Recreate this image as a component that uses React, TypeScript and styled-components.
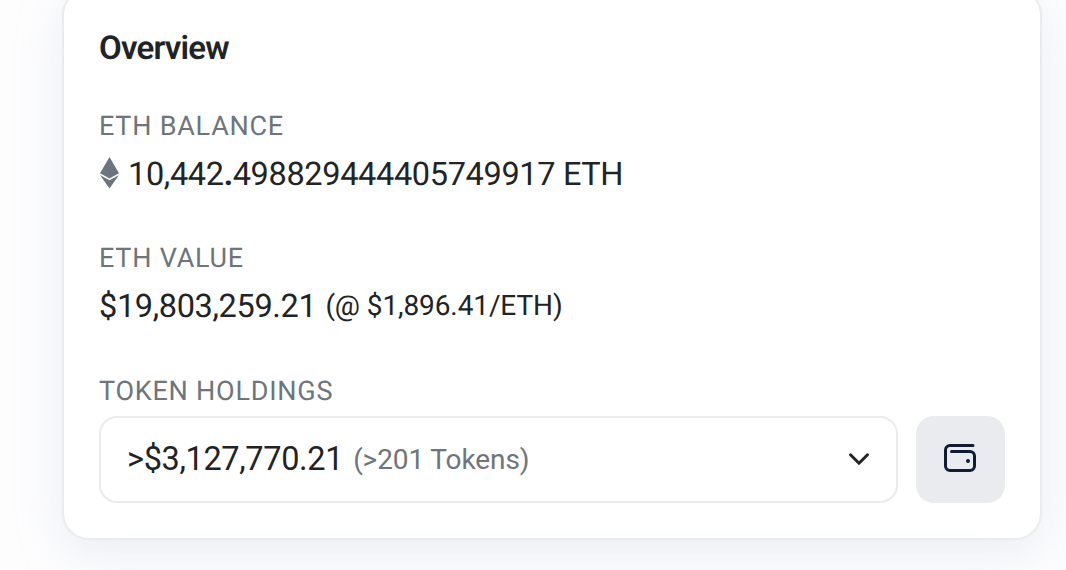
import styled, { createGlobalStyle } from "styled-components";

const GlobalStyle = createGlobalStyle`
  * {
    box-sizing: border-box;
  }

  body {
    margin: 0;
    background: #fdfdfe;
    color: #212325;
    font-family: Roboto, "Liberation Sans", sans-serif;
    text-rendering: geometricPrecision;
  }
`;

const Page = styled.main`
  display: flex;
  gap: 54px;
  height: 570px;
  padding-left: 62px;
  overflow: hidden;
`;

const Card = styled.section`
  flex: 0 0 980px;
  height: 552px;
  margin-top: -12px;
  padding: 39px 35px 0;
  background: #fff;
  border: 2px solid #e9ebee;
  border-radius: 27px;
  box-shadow: 0 14px 46px rgba(186, 195, 214, 0.27);
`;

const Title = styled.h3`
  margin: 0 0 39px;
  font-size: 33px;
  font-weight: 600;
  line-height: 40px;
  letter-spacing: -0.8px;
`;

const Item = styled.div<{ $gap?: number }>`
  margin-bottom: ${({ $gap = 0 }) => $gap}px;
`;

const Label = styled.h4`
  margin: 0;
  color: #6e757c;
  font-size: 27px;
  font-weight: 400;
  line-height: 36px;
  letter-spacing: 0.75px;
`;

const Value = styled.div`
  display: flex;
  align-items: center;
  height: 48px;
  margin-top: 6px;
  font-size: 32.5px;
  letter-spacing: -0.35px;
  white-space: pre;
`;

const EthIcon = styled.svg`
  width: 19px;
  height: 32px;
  margin: -2px 9px 0 1px;
  fill: #6c757d;
`;

const Small = styled.span<{ $muted?: boolean }>`
  margin-left: ${({ $muted }) => ($muted ? 10 : 9)}px;
  margin-top: ${({ $muted }) => ($muted ? 1 : -1)}px;
  color: ${({ $muted }) => ($muted ? "#6e757c" : "inherit")};
  font-size: 28px;
  letter-spacing: -0.1px;
`;

const Holdings = styled.div`
  display: flex;
  gap: 18px;
  margin-top: 7px;
`;

const Dropdown = styled.button`
  display: flex;
  align-items: center;
  width: 799px;
  height: 87px;
  padding: 0 26px 2px 26px;
  background: #fff;
  border: 2px solid #e9ebee;
  border-radius: 18px;
  color: inherit;
  font-family: inherit;
  font-size: 32.5px;
  letter-spacing: -0.35px;
`;

const Chevron = styled.svg`
  width: 22px;
  height: 14px;
  margin-left: auto;
`;

const WalletButton = styled.button`
  display: flex;
  align-items: center;
  justify-content: center;
  width: 89px;
  height: 87px;
  padding: 0 1px 3px 0;
  background: #e9ebef;
  border: 0;
  border-radius: 18px;
  color: #111b36;
`;

const App = () => {
  return (
    <>
      <GlobalStyle />
      <Page>
        <Card>
          <Title>Overview</Title>
          <Item $gap={42}>
            <Label>ETH BALANCE</Label>
            <Value>
              <EthIcon viewBox="0 0 19 32">
                <path d="M9.5 0 19 16.3 9.5 21.5 0 16.3Z" />
                <path d="M0 18.1 9.5 23.3 19 18.1 9.5 31.5Z" />
              </EthIcon>
              <span>10,442<b>.</b>498829444405749917 ETH</span>
            </Value>
          </Item>
          <Item $gap={43}>
            <Label>ETH VALUE</Label>
            <Value>
              <span>$19,803,259.21</span>
              <Small>(@ $1,896.41/ETH)</Small>
            </Value>
          </Item>
          <Item>
            <Label>TOKEN HOLDINGS</Label>
            <Holdings>
              <Dropdown>
                <span>&gt;$3,127,770.21</span>
                <Small $muted>(&gt;201 Tokens)</Small>
                <Chevron viewBox="0 0 22 14" fill="none" stroke="#212325" strokeWidth="3" strokeLinecap="round" strokeLinejoin="round">
                  <path d="M2.5 2.8 11 11.3 19.5 2.8" />
                </Chevron>
              </Dropdown>
              <WalletButton aria-label="Wallet">
                <svg width="34" height="30" viewBox="0 0 34 30" fill="none" stroke="currentColor" strokeWidth="3" strokeLinecap="round" strokeLinejoin="round">
                  <path d="M30 2.5H7A4.500 4.500 0 0 0 2.500 7v16A4.500 4.500 0 0 0 7 27.500h20a4.500 4.500 0 0 0 4.500-4.500v-10a4.500 4.500 0 0 0-4.500-4.500H8.500" />
                  <circle cx="25" cy="18" r="2" fill="currentColor" stroke="none" />
                </svg>
              </WalletButton>
            </Holdings>
          </Item>
        </Card>
        <Card />
      </Page>
    </>
  );
};

export default App;
